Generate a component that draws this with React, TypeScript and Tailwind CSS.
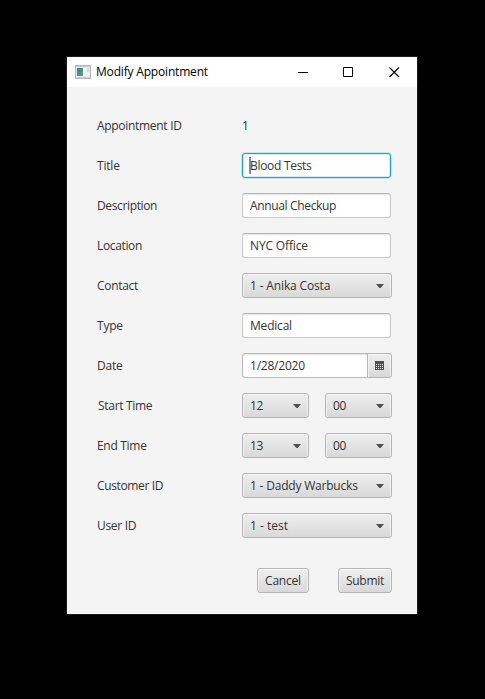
import React from "react";

const FIELD = "h-[25px] rounded-[3px] border flex items-center pl-[7px] whitespace-nowrap";
const GREY = "border-[#b5b5b5] bg-linear-to-b from-[#efefef] to-[#d9d9d9] shadow-[inset_0_1px_0_#fafafa,inset_1px_0_0_#f1f1f1,inset_-1px_0_0_#f1f1f1]";

function Row({ label, spacing = "tracking-[-0.3px]", children }: { label: string; spacing?: string; children: React.ReactNode }) {
  return (
    <div className="flex h-10 items-start pt-2">
      <div className={`w-[145px] shrink-0 whitespace-nowrap leading-[25px] ${spacing}`}>{label}</div>
      <div className="flex">{children}</div>
    </div>
  );
}

function TextBox({ value, spacing = "" }: { value: string; spacing?: string }) {
  return (
    <div className={`${FIELD} w-[149px] border-[#c8c8c8] border-t-[#b5b5b5] bg-white shadow-[inset_0_2px_2px_-1px_#e0e0e0] ${spacing}`}>
      {value}
    </div>
  );
}

function Combo({ value, width = "w-[150px]", spacing = "" }: { value: string; width?: string; spacing?: string }) {
  return (
    <div className={`${FIELD} ${GREY} ${width} justify-between pr-[7px] ${spacing}`}>
      <span>{value}</span>
      <svg width="8" height="4" viewBox="0 0 8 4" className="shrink-0">
        <path d="M0 0H8L4.6 4H3.4Z" fill="#505050" />
      </svg>
    </div>
  );
}

function AppIcon() {
  return (
    <svg width="16" height="14" viewBox="0 0 16 14" className="shrink-0">
      <defs>
        <linearGradient id="pane" x1="0" y1="0" x2="1" y2="1">
          <stop offset="0" stopColor="#4777a5" />
          <stop offset="1" stopColor="#55a777" />
        </linearGradient>
      </defs>
      <rect x="0.5" y="0.5" width="15" height="13" fill="#e6e8ec" stroke="#b4b8be" />
      <path d="M1 1.5H15" stroke="#c8ccd4" />
      <rect x="2" y="3" width="6" height="8" fill="url(#pane)" />
      <rect x="8" y="3" width="3" height="8" fill="#f6f7f8" />
      <rect x="12" y="3" width="2" height="4" fill="#cfe0d6" />
      <rect x="12" y="7" width="2" height="4" fill="#f4f5f5" />
      <path d="M1 12.5H15" stroke="#d0d3d8" />
    </svg>
  );
}

function CalendarIcon() {
  return (
    <svg width="9" height="9" viewBox="0 0 9 9" shapeRendering="crispEdges">
      <rect width="9" height="9" fill="#505050" />
      <g fill="#e8e8e8">
        {[3, 5, 7].map((y) => [1, 3, 5, 7].map((x) => <rect key={`${x}-${y}`} x={x} y={y} width="1" height="1" />))}
      </g>
    </svg>
  );
}

export default function App() {
  return (
    <div className="h-[699px] w-[485px] bg-black pt-[56px] pl-[66px] font-['Open_Sans','Noto_Sans',sans-serif] text-[12px] text-[#333]">
      <div className="h-[559px] w-[352px] border border-[#1c1c1c] bg-[#f4f4f4]">
        <div className="flex h-[30px] items-center bg-white text-black">
          <div className="flex flex-1 items-center pl-[8px]">
            <AppIcon />
            <span className="ml-[5px] whitespace-nowrap tracking-[-0.18px]">Modify Appointment</span>
          </div>
          <div className="flex items-center gap-[35px] pr-[17px]">
            <svg width="10" height="11" viewBox="0 0 10 11"><path d="M0 5.5H10" stroke="#000" /></svg>
            <svg width="11" height="11" viewBox="0 0 11 11" fill="none"><path d="M.5 .5H9.5V9.5H.5Z" stroke="#000" /></svg>
            <svg width="11" height="11" viewBox="0 0 11 11"><path d="M.5 .5L10 10M10 .5L.5 10" stroke="#000" strokeWidth="1.1" /></svg>
          </div>
        </div>
        <div className="pt-[18px] pl-[30px]">
          <Row label="Appointment ID"><span className="leading-[25px]">1</span></Row>
          <Row label="Title" spacing="tracking-[-0.2px]">
            <div className={`${FIELD} w-[149px] border-[#1ba1cf] bg-white tracking-[-0.3px] shadow-[0_0_0_1px_#c5e6f1,inset_0_0_0_1px_#d9eef5]`}>
              <span className="-ml-px h-[17px] w-[2px] bg-[#8a8a8a]" />
              <span className="-ml-px">Blood Tests</span>
            </div>
          </Row>
          <Row label="Description" spacing="tracking-[-0.36px]"><TextBox value="Annual Checkup" spacing="tracking-[-0.35px]" /></Row>
          <Row label="Location" spacing="tracking-[-0.36px]"><TextBox value="NYC Office" spacing="tracking-[-0.15px]" /></Row>
          <Row label="Contact"><Combo value="1 - Anika Costa" spacing="tracking-[-0.15px]" /></Row>
          <Row label="Type" spacing="tracking-[-0.2px]"><TextBox value="Medical" spacing="tracking-[-0.2px]" /></Row>
          <Row label="Date" spacing="tracking-[-0.2px]">
            <div className={`${FIELD} w-[126px] rounded-r-none border-[#b9b9b9] bg-white tracking-[-0.22px] shadow-[inset_0_2px_2px_-1px_#e0e0e0]`}>1/28/2020</div>
            <div className={`-ml-px flex h-[25px] w-[25px] items-center justify-center rounded-r-[3px] border ${GREY}`}><CalendarIcon /></div>
          </Row>
          <Row label="Start Time" spacing="pl-px tracking-[-0.3px]">
            <Combo value="12" width="w-[67px]" spacing="tracking-[-0.3px]" /><span className="w-4" /><Combo value="00" width="w-[67px]" spacing="tracking-[-0.3px]" />
          </Row>
          <Row label="End Time">
            <Combo value="13" width="w-[67px]" spacing="tracking-[-0.3px]" /><span className="w-4" /><Combo value="00" width="w-[67px]" spacing="tracking-[-0.3px]" />
          </Row>
          <Row label="Customer ID" spacing="tracking-[-0.36px]"><Combo value="1 - Daddy Warbucks" spacing="tracking-[-0.2px]" /></Row>
          <Row label="User ID"><Combo value="1 - test" /></Row>
          <div className="flex gap-[29px] pt-[23px] pl-[160px]">
            <button className={`flex h-[25px] w-[52px] items-center justify-center rounded-[3px] border tracking-[-0.2px] ${GREY}`}>Cancel</button>
            <button className={`flex h-[25px] w-[54px] items-center justify-center rounded-[3px] border tracking-[-0.25px] ${GREY}`}>Submit</button>
          </div>
        </div>
      </div>
    </div>
  );
}
